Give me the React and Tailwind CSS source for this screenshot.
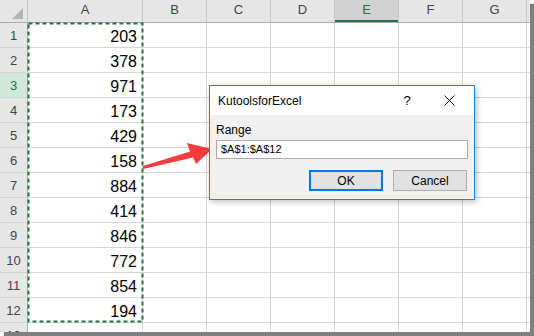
import React from 'react';

const values = [203, 378, 971, 173, 429, 158, 884, 414, 846, 772, 854, 194];
const cols = ['B', 'C', 'D', 'E', 'F', 'G'];

const HeaderRow = () => (
    <div className="flex h-[23px] bg-[#e6e6e6] border-b border-[#ababab]">
        <div className="relative w-[28px] shrink-0 border-r border-[#c6c6c6]">
            <svg className="absolute right-[4px] bottom-[3px]" width="11" height="11" viewBox="0 0 11 11">
                <polygon points="11,0 11,11 0,11" fill="#b4b4b4" />
            </svg>
        </div>
        <div className="w-[115px] shrink-0 flex items-end justify-center pb-[3px] border-r border-[#c6c6c6] text-[13px] text-[#444]">
            A
        </div>
        {cols.map((c) => (
            <div
                key={c}
                className={`w-[64px] shrink-0 flex items-end justify-center pb-[3px] border-r border-[#c6c6c6] text-[13px] ${
                    c === 'E' ? 'bg-[#d2d2d2] text-[#217346] shadow-[inset_0_-2px_0_#217346]' : 'text-[#444]'
                }`}
            >
                {c}
            </div>
        ))}
        <div className="flex-1" />
    </div>
);

const Row = ({ num, value }) => (
    <div className="flex h-[25px] border-b border-[#d4d4d4]">
        <div
            className={`w-[28px] shrink-0 flex items-end justify-center pb-[2px] border-r border-[#ababab] text-[13px] ${
                num === 3 ? 'bg-[#d3e6da] text-[#217346]' : 'bg-[#e6e6e6] text-[#444]'
            }`}
        >
            {num}
        </div>
        <div className="w-[115px] shrink-0 flex items-end justify-end pr-[5px] pb-[1px] border-r border-[#d4d4d4] text-[16px] leading-[18px] text-black">
            {value}
        </div>
        {cols.map((c) => (
            <div key={c} className="w-[64px] shrink-0 border-r border-[#d4d4d4]" />
        ))}
        <div className="flex-1" />
    </div>
);

const Dialog = () => (
    <div className="absolute left-[209px] top-[85px] w-[266px] h-[115px] flex flex-col border border-[#1883d7] bg-[#f0f0f0] shadow-[2px_2px_6px_rgba(0,0,0,0.25)]">
        <div className="h-[29px] shrink-0 flex items-center bg-white pl-[8px] text-[12px] text-black">
            <span className="flex-1">KutoolsforExcel</span>
            <span className="w-[20px] text-center text-[13px] mr-[27px]">?</span>
            <svg className="mr-[19px]" width="11" height="11" viewBox="0 0 11 11">
                <path d="M0.5 0.5 L10.5 10.5 M10.5 0.5 L0.5 10.5" stroke="#111" strokeWidth="1" />
            </svg>
        </div>
        <div className="flex flex-col px-[6px] pt-[8px]">
            <div className="text-[12px] leading-[14px] text-black">Range</div>
            <div className="mt-[3px] h-[19px] w-[252px] flex items-center bg-white border border-[#acacac] pl-[4px] text-[11px] text-black">
                $A$1:$A$12
            </div>
            <div className="mt-[11px] flex justify-end gap-[10px] pr-[1px]">
                <button className="w-[74px] h-[21px] flex items-center justify-center bg-[#e1e1e1] border-2 border-[#0078d7] text-[12px] text-black">
                    OK
                </button>
                <button className="w-[74px] h-[21px] flex items-center justify-center bg-[#e1e1e1] border border-[#adadad] text-[12px] text-black">
                    Cancel
                </button>
            </div>
        </div>
    </div>
);

const App = () => {
    return (
        <div className="w-[534px] h-[336px] bg-white font-['Liberation_Sans',Arial,sans-serif]">
            <div className="relative w-[530px] h-[332px] overflow-hidden bg-white shadow-[4px_4px_1px_rgba(0,0,0,0.5)]">
                <HeaderRow />
                {values.map((v, i) => (
                    <Row key={i} num={i + 1} value={v} />
                ))}
                <Row num={13} value="" />

                {/* marching ants around A1:A12 */}
                <svg className="absolute left-0 top-0" width="530" height="332">
                    <rect
                        x="28.5"
                        y="23.5"
                        width="114"
                        height="298"
                        fill="none"
                        stroke="#217346"
                        strokeWidth="2"
                        strokeDasharray="4 3"
                    />
                    <polygon
                        points="143,166 190,151.5 187,143 212,149 196,164 193,157.5 143,169"
                        fill="#f53b3b"
                    />
                </svg>

                <Dialog />
            </div>
        </div>
    );
};

export default App;
